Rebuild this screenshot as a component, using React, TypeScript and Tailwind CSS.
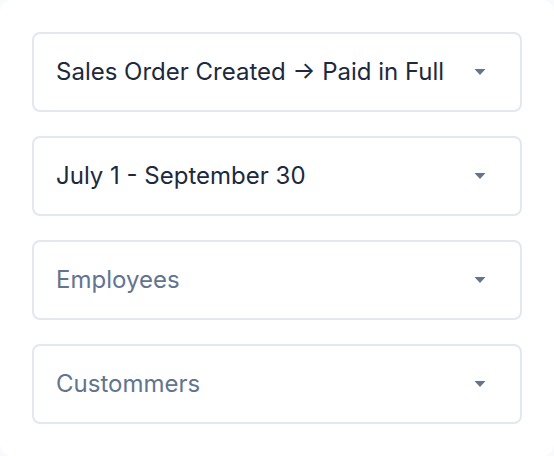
const fields = [
  { label: "Sales Order Created → Paid in Full", placeholder: false },
  { label: "July 1 - September 30", placeholder: false },
  { label: "Employees", placeholder: true },
  { label: "Custommers", placeholder: true },
];

function Caret() {
  return (
    <svg width="12" height="6" viewBox="0 0 12 6" className="shrink-0 text-slate-500">
      <path d="M0.5 0h11L6 6z" fill="currentColor" />
    </svg>
  );
}

export default function App() {
  return (
    <div className="w-[554px] h-[456px] bg-gray-50 font-['Inter',sans-serif]">
      <div className="h-full bg-white rounded-xl p-8 flex flex-col gap-6">
        {fields.map((f) => (
          <button
            key={f.label}
            className="h-[80px] flex items-center justify-between border-2 border-slate-200 rounded-lg pl-[22px] pr-[34px] pb-px text-left"
          >
            <span className={`text-2xl ${f.placeholder ? "text-slate-500" : "text-slate-800"}`}>
              {f.label}
            </span>
            <Caret />
          </button>
        ))}
      </div>
    </div>
  );
}
